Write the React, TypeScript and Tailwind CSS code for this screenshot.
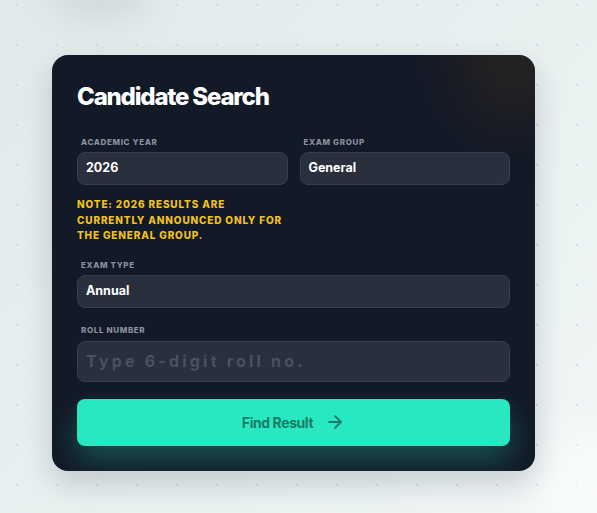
import React from "react";
import { ArrowRight } from "lucide-react";

const Label = ({ children }: { children: React.ReactNode }) => (
  <div className="pl-[4px] text-[8px] leading-[10px] font-extrabold tracking-[0.08em] uppercase text-[#8a909c]">
    {children}
  </div>
);

const Field = ({ value, h = "h-[33px]" }: { value: string; h?: string }) => (
  <div
    className={`${h} mt-[5px] flex items-center rounded-[8px] border border-[#373e4c] bg-[#292f3c] pl-[8px] text-[12.5px] font-bold text-white`}
  >
    {value}
  </div>
);

export default function App() {
  return (
    <div
      className="relative min-h-[513px] w-full overflow-hidden bg-[linear-gradient(135deg,#e1eaeb_0%,#e8f0f0_50%,#f2f7f7_100%)]"
      style={{ fontFamily: "Inter, 'Noto Sans', sans-serif" }}
    >
      <div className="pointer-events-none absolute inset-0 bg-[radial-gradient(circle,#d3dddf_1px,transparent_1.5px)] bg-[length:40px_40px] bg-[position:-3px_-15px]" />
      <div className="pointer-events-none absolute left-[50px] top-[-50px] h-[70px] w-[100px] rounded-full bg-[#c5cfd1] opacity-60 blur-[18px]" />
      <div className="pointer-events-none absolute right-[-60px] bottom-[-40px] h-[120px] w-[120px] rounded-full bg-[#ffffff] opacity-60 blur-[20px]" />

      <div className="relative pl-[52px] pt-[55px]">
        <div className="relative w-[483px] overflow-hidden rounded-[16px] bg-[#121927] px-[25px] pt-[26px] pb-[25px] shadow-[0_12px_30px_rgba(15,23,42,0.18)]">
          <div className="pointer-events-none absolute right-[-50px] top-[-60px] h-[130px] w-[130px] rounded-full bg-[#33291f] opacity-60 blur-[30px]" />
          <h1 className="relative text-[24px] leading-[32px] font-extrabold tracking-[-0.05em] text-white">
            Candidate Search
          </h1>

          <div className="relative mt-[24px] grid grid-cols-2 gap-x-[12px]">
            <div>
              <Label>Academic Year</Label>
              <Field value="2026" />
              <p className="mt-[12px] text-[10px] leading-[15.5px] font-extrabold uppercase tracking-[0.085em] text-[#f2c21b] whitespace-nowrap">
                Note: 2026 results are
                <br />
                currently announced only for
                <br />
                the General group.
              </p>
            </div>
            <div>
              <Label>Exam Group</Label>
              <Field value="General" />
            </div>
          </div>

          <div className="relative mt-[16px]">
            <Label>Exam Type</Label>
            <Field value="Annual" />
          </div>

          <div className="relative mt-[17px]">
            <Label>Roll Number</Label>
            <div className="mt-[6px] flex h-[41px] items-center rounded-[8px] border border-[#373e4c] bg-[#292f3c] pl-[8px] text-[16px] font-bold tracking-[0.2em] text-[#4a5160]">
              Type 6-digit roll no.
            </div>
          </div>

          <button className="relative mt-[17px] flex h-[47px] w-full items-center justify-center gap-[12px] rounded-[8px] bg-[#27e8c0] text-[14px] font-bold tracking-[-0.03em] text-[#1b7c69] shadow-[0_14px_30px_rgba(39,232,192,0.28)]">
            Find Result
            <ArrowRight size={20} strokeWidth={2.2} />
          </button>
        </div>
      </div>
    </div>
  );
}
